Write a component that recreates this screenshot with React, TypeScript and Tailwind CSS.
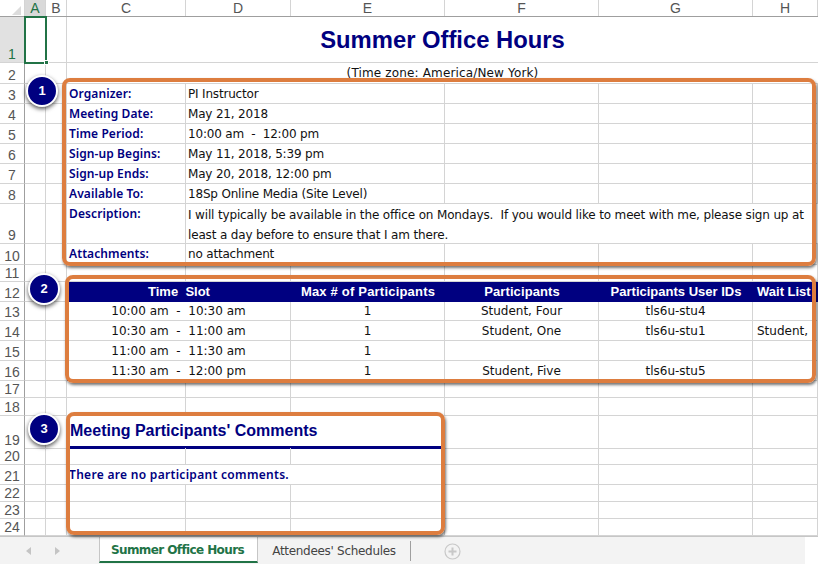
import type { ReactNode } from 'react';

const GRID = 'grid grid-cols-[25px_21px_21px_119px_105px_154px_154px_154px_65px]';
const LINE = 'border-r border-b border-[#d4d4d4]';
const DATA = "font-['DejaVu_Sans',sans-serif] text-[12px] text-[#111] whitespace-pre";
const LABEL = "font-['Noto_Sans',sans-serif] text-[12px] font-semibold tracking-[0.1px] text-[#000080]";

function Row({ n, h, active, children }: { n: number; h: string; active?: boolean; children: ReactNode }) {
  return (
    <div className={`${GRID} ${h}`}>
      <div
        className={`flex items-end justify-center border-r border-b border-r-[#9f9f9f] border-b-[#d4d4d4] font-['Liberation_Sans',sans-serif] text-[14px] leading-4 ${
          active ? 'bg-[#e1e1e1] text-[#217346]' : 'bg-[#fff] text-[#555]'
        }`}
      >
        {n}
      </div>
      <div className={LINE} />
      <div className={LINE} />
      {children}
    </div>
  );
}

function Cell({ className = '', children }: { className?: string; children?: ReactNode }) {
  return (
    <div className={`flex min-w-0 items-center overflow-hidden whitespace-nowrap ${LINE} ${className}`}>{children}</div>
  );
}

function EmptyCells({ count }: { count: number }) {
  return (
    <>
      {Array.from({ length: count }).map((_, i) => (
        <Cell key={i} />
      ))}
    </>
  );
}

function InfoRow({ n, h = 'h-[20px]', label, value }: { n: number; h?: string; label: string; value: string }) {
  return (
    <Row n={n} h={h}>
      <Cell className={`pl-[2px] ${LABEL}`}>{label}</Cell>
      <Cell className={`col-span-2 pl-[2px] tracking-[-0.18px] ${DATA}`}>{value}</Cell>
      <EmptyCells count={3} />
    </Row>
  );
}

const slots = [
  { n: 13, h: 'h-[19px]', time: '10:00 am  -  10:30 am', who: 'Student, Four', id: 'tls6u-stu4', wait: '' },
  { n: 14, h: 'h-[20px]', time: '10:30 am  -  11:00 am', who: 'Student, One', id: 'tls6u-stu1', wait: 'Student,' },
  { n: 15, h: 'h-[20px]', time: '11:00 am  -  11:30 am', who: '', id: '', wait: '' },
  { n: 16, h: 'h-[20px]', time: '11:30 am  -  12:00 pm', who: 'Student, Five', id: 'tls6u-stu5', wait: '' },
];

function Callout({ className }: { className: string }) {
  return (
    <div
      className={`pointer-events-none absolute rounded-[8px] border-[4px] border-[#dd7d3f] shadow-[1px_2px_3px_rgba(0,0,0,0.55)] ${className}`}
    />
  );
}

function Badge({ n, className }: { n: number; className: string }) {
  return (
    <div
      className={`absolute flex h-[32px] w-[32px] items-center justify-center rounded-full border-[2px] border-white bg-[#000080] font-['Liberation_Sans',sans-serif] text-[13px] font-bold text-white shadow-[0_2px_4px_rgba(0,0,0,0.65)] ${className}`}
    >
      {n}
    </div>
  );
}

export default function App() {
  return (
    <div className="relative h-[564px] w-[818px] overflow-hidden bg-white">
      {/* column letters */}
      <div className={`${GRID} h-[17px] border-b border-[#9f9f9f] font-['Liberation_Sans',sans-serif] text-[14px] leading-[16px] text-[#555]`}>
        <div className="flex items-end justify-end border-r border-[#d4d4d4] pb-[1px] pr-[3px]">
          <div className="h-0 w-0 border-b-[9px] border-l-[9px] border-b-[#dcdcdc] border-l-transparent" />
        </div>
        <div className="border-r border-[#d4d4d4] bg-[#d9d9d9] text-center text-[#217346]">A</div>
        {['B', 'C', 'D', 'E', 'F', 'G', 'H'].map((c) => (
          <div key={c} className="border-r border-[#d4d4d4] text-center">
            {c}
          </div>
        ))}
      </div>

      <Row n={1} h="h-[46px]" active>
        <div className="col-span-6 flex items-center justify-center border-b border-[#d4d4d4] pt-[1px] font-['Liberation_Sans',sans-serif] text-[23.8px] font-bold text-[#000080]">
          Summer Office Hours
        </div>
      </Row>
      <Row n={2} h="h-[21px]">
        <div className={`col-span-6 flex items-center justify-center border-b border-[#d4d4d4] tracking-[0.15px] ${DATA}`}>
          (Time zone: America/New York)
        </div>
      </Row>

      <InfoRow n={3} label="Organizer:" value="PI Instructor" />
      <InfoRow n={4} label="Meeting Date:" value="May 21, 2018" />
      <InfoRow n={5} label="Time Period:" value="10:00 am  -  12:00 pm" />
      <InfoRow n={6} label="Sign-up Begins:" value="May 11, 2018, 5:39 pm" />
      <InfoRow n={7} label="Sign-up Ends:" value="May 20, 2018, 12:00 pm" />
      <InfoRow n={8} label="Available To:" value="18Sp Online Media (Site Level)" />
      <Row n={9} h="h-[40px]">
        <Cell className={`items-start pl-[2px] pt-[1px] ${LABEL}`}>Description:</Cell>
        <div className={`col-span-5 overflow-hidden border-b border-[#d4d4d4] pl-[2px] pt-[1px] leading-5 tracking-[-0.15px] ${DATA}`}>
          {'I will typically be available in the office on Mondays.  If you would like to meet with me, please sign up at\nleast a day before to ensure that I am there.'}
        </div>
      </Row>
      <InfoRow n={10} h="h-[21px]" label="Attachments:" value="no attachment" />
      <Row n={11} h="h-[17px]">
        <EmptyCells count={6} />
      </Row>

      <Row n={12} h="h-[20px]">
        <div className="col-span-6 grid grid-cols-[224px_154px_154px_154px_65px] items-center whitespace-pre bg-[#000080] font-['Liberation_Sans',sans-serif] text-[13px] font-bold text-white">
          <div className="text-center">Time  Slot</div>
          <div className="text-center tracking-[0.2px]">Max # of Participants</div>
          <div className="text-center tracking-[0.1px]">Participants</div>
          <div className="text-center">Participants User IDs</div>
          <div className="pl-[4px]">Wait List</div>
        </div>
      </Row>
      {slots.map((s) => (
        <Row key={s.n} n={s.n} h={s.h}>
          <Cell className={`col-span-2 justify-center ${DATA} ${s.n === 16 ? 'border-b-[#000080]' : ''}`}>{s.time}</Cell>
          <Cell className={`justify-center ${DATA}`}>1</Cell>
          <Cell className={`justify-center ${DATA}`}>{s.who}</Cell>
          <Cell className={`justify-center ${DATA}`}>{s.id}</Cell>
          <Cell className={`pl-[4px] ${DATA}`}>{s.wait}</Cell>
        </Row>
      ))}
      <Row n={17} h="h-[17px]">
        <EmptyCells count={6} />
      </Row>
      <Row n={18} h="h-[18px]">
        <EmptyCells count={6} />
      </Row>

      <Row n={19} h="h-[32px]">
        <div className="col-span-3 flex h-[33px] items-start border-b-[3px] border-[#000080] pl-[3px] pt-[5px] font-['Liberation_Sans',sans-serif] text-[16px] font-bold leading-5 text-[#000080]">
          Meeting Participants' Comments
        </div>
        <EmptyCells count={3} />
      </Row>
      <Row n={20} h="h-[17px]">
        <EmptyCells count={6} />
      </Row>
      <Row n={21} h="h-[20px]">
        <Cell className="col-span-3 pl-[2px] font-['Noto_Sans',sans-serif] text-[12px] font-semibold tracking-[0.3px] text-[#000080]">
          There are no participant comments.
        </Cell>
        <EmptyCells count={3} />
      </Row>
      {[22, 23, 24].map((n) => (
        <Row key={n} n={n} h="h-[17px]">
          <EmptyCells count={6} />
        </Row>
      ))}
      <div className="h-[1px] bg-[#c6c6c6]" />

      {/* sheet tabs */}
      <div className="flex h-[27px] w-[805px] items-start bg-[#f3f3f3]">
        <div className="flex h-[27px] w-[99px] items-center gap-[24px] pl-[26px]">
          <div className="h-0 w-0 border-y-[4px] border-r-[5px] border-y-transparent border-r-[#c4c4c4]" />
          <div className="h-0 w-0 border-y-[4px] border-l-[5px] border-y-transparent border-l-[#c4c4c4]" />
        </div>
        <div className="flex h-[26px] w-[159px] items-center justify-center border-x border-b-[2px] border-x-[#c6c6c6] border-b-[#217346] bg-white pr-[2px] pt-[1px] font-['DejaVu_Sans',sans-serif] text-[12px] font-bold tracking-[-0.6px] text-[#217346]">
          Summer Office Hours
        </div>
        <div className="mt-[4px] flex h-[20px] w-[153px] items-center justify-center border-r border-[#9f9f9f] font-['DejaVu_Sans',sans-serif] text-[12px] tracking-[-0.3px] text-[#444]">
          Attendees' Schedules
        </div>
        <svg className="ml-[33px] mt-[6px]" width="17" height="17" viewBox="0 0 17 17" fill="none">
          <circle cx="8.5" cy="8.5" r="7.5" stroke="#c8c8c8" strokeWidth="1.2" />
          <path d="M8.5 4.5v8M4.5 8.5h8" stroke="#c8c8c8" strokeWidth="2" />
        </svg>
      </div>

      {/* active cell A1 */}
      <div className="absolute left-[24px] top-[16px] h-[48px] w-[23px] border-[2px] border-[#217346]" />
      <div className="absolute left-[44px] top-[60px] h-[5px] w-[5px] border border-white bg-[#217346]" />

      {/* overlays */}
      <Callout className="left-[62px] top-[78px] h-[188px] w-[754px]" />
      <Callout className="left-[65px] top-[275px] h-[108px] w-[751px]" />
      <Callout className="left-[66px] top-[412px] h-[123px] w-[379px]" />
      <Badge n={1} className="left-[26px] top-[75px]" />
      <Badge n={2} className="left-[28px] top-[273px]" />
      <Badge n={3} className="left-[28px] top-[413px]" />
    </div>
  );
}
